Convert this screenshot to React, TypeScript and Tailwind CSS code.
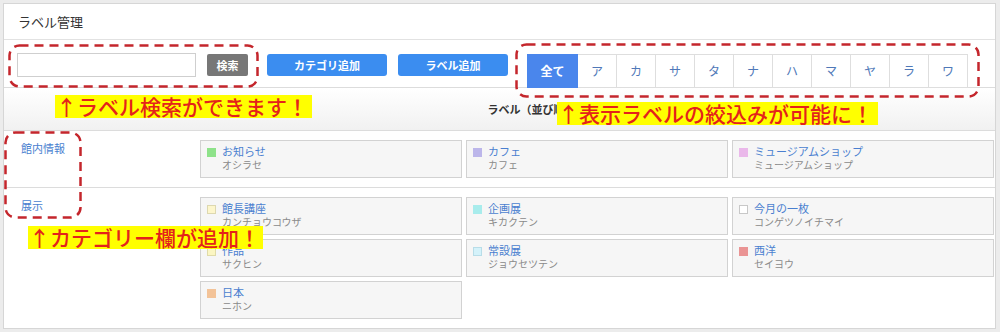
import React from "react";

type Label = { name: string; kana: string; swatch: string };

const FONT = {
  fontFamily: '"Noto Sans CJK JP", "Noto Sans", sans-serif',
};

const kanaFilters = ["ア", "カ", "サ", "タ", "ナ", "ハ", "マ", "ヤ", "ラ", "ワ"];

const categories: { name: string; labels: Label[] }[] = [
  {
    name: "館内情報",
    labels: [
      { name: "お知らせ", kana: "オシラセ", swatch: "bg-[#8ee28a]" },
      { name: "カフェ", kana: "カフェ", swatch: "bg-[#bcb6ea]" },
      { name: "ミュージアムショップ", kana: "ミュージアムショップ", swatch: "bg-[#eab8ea]" },
    ],
  },
  {
    name: "展示",
    labels: [
      { name: "館長講座", kana: "カンチョウコウザ", swatch: "bg-[#fdf6cc] border border-[#ddd8b0]" },
      { name: "企画展", kana: "キカクテン", swatch: "bg-[#a8ecec]" },
      { name: "今月の一枚", kana: "コンゲツノイチマイ", swatch: "bg-white border border-[#c8c8c8]" },
      { name: "作品", kana: "サクヒン", swatch: "bg-[#fbf6c2] border border-[#e0dba8]" },
      { name: "常設展", kana: "ジョウセツテン", swatch: "bg-[#d4f2fa] border border-[#b8dde8]" },
      { name: "西洋", kana: "セイヨウ", swatch: "bg-[#ea9494]" },
      { name: "日本", kana: "ニホン", swatch: "bg-[#f3c398]" },
    ],
  },
];

function LabelCard({ label }: { label: Label }) {
  return (
    <div className="h-[38px] border border-[#d2d2d2] bg-[#f6f6f6] pl-[6px] pt-[4px] flex">
      <span className={`mt-[3px] w-[9px] h-[9px] shrink-0 ${label.swatch}`} />
      <div className="ml-[6px] flex flex-col">
        <span className="text-[11px] leading-[13px] text-[#4a7fd0]">{label.name}</span>
        <span className="text-[10px] leading-[13px] text-[#8a8a8a]">{label.kana}</span>
      </div>
    </div>
  );
}

function DashedBox({ className, w, h }: { className: string; w: number; h: number }) {
  return (
    <svg className={`absolute ${className}`} width={w} height={h}>
      <rect
        x={1.5}
        y={1.5}
        width={w - 3}
        height={h - 3}
        rx={10}
        fill="none"
        stroke="#c4262c"
        strokeWidth={2.5}
        strokeDasharray="9 6"
      />
    </svg>
  );
}

function Note({ className, children }: { className: string; children: React.ReactNode }) {
  return (
    <div
      className={`absolute bg-[#ffff00] text-[#e4221b] text-[21px] leading-[23px] font-medium px-[1px] whitespace-nowrap ${className}`}
    >
      {children}
    </div>
  );
}

export default function App() {
  return (
    <div className="relative w-[1000px] h-[332px] bg-[#ececec] pt-[3px] pl-[3px] pr-[4px] overflow-hidden" style={FONT}>
      <div className="h-[326px] border border-[#d6d6d6] bg-white flex flex-col">
        {/* Title */}
        <div className="h-[36px] shrink-0 border-b border-[#e2e2e2] pl-[14px] flex items-center">
          <h1 className="text-[13px] text-[#333]">ラベル管理</h1>
        </div>

        {/* Toolbar */}
        <div className="h-[48px] shrink-0 border-b border-[#dcdcdc] flex items-start pt-[13px] pl-[13px]">
          <input className="w-[179px] h-[24px] border border-[#cfcfcf] bg-white" />
          <button className="ml-[11px] mt-[1px] w-[41px] h-[22px] rounded-[2px] bg-[#777] text-white text-[11px] font-bold">
            検索
          </button>
          <button className="ml-[19px] mt-[1px] w-[120px] h-[22px] rounded-[3px] bg-[#3b8df0] text-white text-[11px] font-bold">
            カテゴリ追加
          </button>
          <button className="ml-[11px] mt-[1px] w-[110px] h-[22px] rounded-[3px] bg-[#3b8df0] text-white text-[11px] font-bold">
            ラベル追加
          </button>
          <div className="ml-[19px] mt-[1px] h-[34px] flex">
            <button className="w-[51px] h-full bg-[#4a86ec] text-white text-[12px] font-bold">全て</button>
            {kanaFilters.map((k) => (
              <button
                key={k}
                className="w-[39px] h-full border border-l-0 border-[#dedede] bg-white text-[12px] text-[#4f78b8]"
              >
                {k}
              </button>
            ))}
          </div>
        </div>

        {/* Column header */}
        <div className="h-[43px] shrink-0 border-b border-[#dcdcdc] bg-gradient-to-b from-white to-[#f1f1f1] flex items-center">
          <div className="w-[196px] shrink-0" />
          <div className="flex-1 text-center text-[11px] font-bold text-[#333]">
            ラベル（並び順はドラッグで変更できます）
          </div>
        </div>

        {/* Rows */}
        {categories.map((cat, i) => (
          <div
            key={cat.name}
            className={`flex ${i === 0 ? "border-b border-[#dcdcdc]" : "flex-1"}`}
          >
            <div className="w-[196px] shrink-0 pl-[17px] pt-[9px] text-[11px] text-[#4a7fd0]">{cat.name}</div>
            <div className="flex-1 pr-[1px] py-[9px] grid grid-cols-3 gap-x-[4px] gap-y-[4px] content-start">
              {cat.labels.map((l) => (
                <LabelCard key={l.name} label={l} />
              ))}
            </div>
          </div>
        ))}
      </div>

      {/* Annotations */}
      <DashedBox className="left-[8px] top-[44px]" w={251} h={44} />
      <DashedBox className="left-[515px] top-[43px]" w={465} h={55} />
      <DashedBox className="left-[4px] top-[131px]" w={78} h={88} />
      <Note className="left-[55px] top-[95px] w-[257px]">↑ラベル検索ができます！</Note>
      <Note className="left-[557px] top-[102px] w-[321px]">↑表示ラベルの絞込みが可能に！</Note>
      <Note className="left-[28px] top-[226px] w-[235px]">↑カテゴリー欄が追加！</Note>
    </div>
  );
}
